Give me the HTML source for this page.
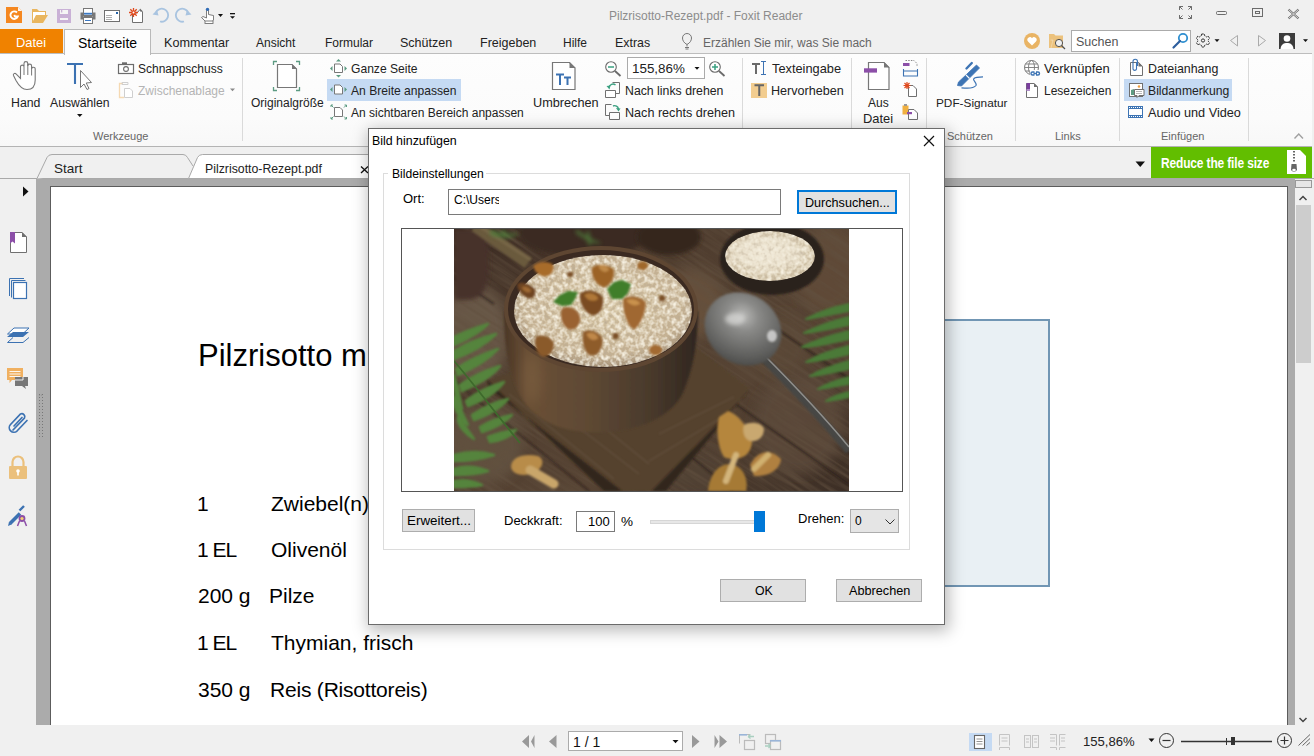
<!DOCTYPE html>
<html><head><meta charset="utf-8">
<style>
*{margin:0;padding:0;box-sizing:border-box}
html,body{width:1314px;height:756px;overflow:hidden;background:#f0f0f0;font-family:"Liberation Sans",sans-serif;color:#222}
.a{position:absolute}
.t{position:absolute;font-size:12px;line-height:14px;white-space:nowrap}
svg{position:absolute;overflow:visible}
</style></head><body>
<!-- title bar -->
<div class="a" style="left:0;top:0;width:1314px;height:29px;background:#f0f0f0"></div>
<div class="t" style="left:609px;top:9px;color:#8c8c8c">Pilzrisotto-Rezept.pdf - Foxit Reader</div>

<!-- quick access icons -->
<svg style="left:0;top:0" width="240" height="29" viewBox="0 0 240 29">
<path d="M6 7 H18 L22 11 V23 H6 Z" fill="#f5871f"/><path d="M18 7 L22 11 H18 Z" fill="#fff" opacity="0.9"/>
<path d="M17 12.5 A3.8 3.8 0 1 0 17.8 16.5 L15 16.5 L14.2 15" stroke="#fff" stroke-width="1.9" fill="none"/>
<path d="M32 9 H37 L39 11 H46 V16 H39 L36 23 H32 Z" fill="#e9b65f"/><path d="M33 12 H45 V16 H36 L33 22 Z" fill="#fff"/><path d="M36 15 H48 L43 23 H32 Z" fill="#e9b65f"/>
<rect x="57" y="9" width="14" height="14" fill="#c9b1d6"/><rect x="60" y="10" width="8" height="4" fill="#f5f5f5"/><rect x="61" y="10" width="1.3" height="2.5" fill="#c9b1d6"/><rect x="60" y="18" width="8" height="2" fill="#f5f5f5"/>
<rect x="83.5" y="8.5" width="9" height="7" fill="#fff" stroke="#777" stroke-width="1"/><rect x="84" y="12.8" width="8" height="1.8" fill="#3b78c2"/>
<path d="M80.5 12.5 H83.5 V19.5 H80.5 Z M92.5 12.5 H95.5 V19.5 H92.5 Z" fill="#777"/><path d="M83.5 16 H92.5 V17.5 H83.5 Z" fill="#777"/>
<rect x="83.5" y="17.5" width="9" height="6" fill="#fff" stroke="#777" stroke-width="1"/><rect x="85" y="20" width="6" height="1" fill="#3b78c2"/>
<rect x="104.5" y="10.5" width="15" height="11" fill="#fff" stroke="#707070" stroke-width="1"/><rect x="116" y="12" width="2" height="2" fill="#2563a8"/>
<path d="M106 15.5 H112 M106 17.5 H112 M106 19.5 H112" stroke="#999" stroke-width="0.8"/>
<path d="M132.5 13 H137 L140 9.5 L142.5 12 V22.5 H132.5 Z" fill="#fff" stroke="#707070" stroke-width="1"/><path d="M140 8.5 L143 11.5 H140 Z" fill="#707070"/>
<g stroke="#e04a1e" stroke-width="1.3"><path d="M133.5 8 V17 M129 12.5 H138 M130.3 9.3 L136.7 15.7 M136.7 9.3 L130.3 15.7"/></g><circle cx="133.5" cy="12.5" r="1" fill="#fff"/>
<path d="M156 12 A6.5 6.5 0 1 1 160 21.5" stroke="#a9c4e0" stroke-width="1.8" fill="none"/><path d="M152.5 14.5 L157 10 L158.5 15.5 Z" fill="#a9c4e0"/>
<path d="M188 12 A6.5 6.5 0 1 0 184 21.5" stroke="#a9c4e0" stroke-width="1.8" fill="none"/><path d="M191.5 14.5 L187 10 L185.5 15.5 Z" fill="#a9c4e0"/>
<path d="M206.5 15 V9.5 A1 1 0 0 1 208.5 9.5 V14.5 L213.5 15.5 V20 L212 21.5 H205.5 L201.5 17.5 L203 16.5 L206.5 18 Z" fill="#fff" stroke="#707070" stroke-width="0.9"/>
<circle cx="207.5" cy="9.3" r="1.6" fill="#2f6cb8"/><rect x="205" y="21" width="8" height="2.5" fill="#fff" stroke="#707070" stroke-width="0.9"/>
<path d="M218 14 H223 L220.5 17 Z" fill="#111"/>
<rect x="230" y="13" width="5" height="1.3" fill="#111"/><path d="M230 16.2 H235 L232.5 18.8 Z" fill="#111"/>
</svg>
<!-- window controls -->
<svg style="left:1170px;top:0" width="144" height="29" viewBox="1170 0 144 29">
<g stroke="#6c6c6c" stroke-width="1" fill="none">
<path d="M1179.5 6.5 H1183 M1179.5 6.5 V10 M1179.5 6.5 L1182.5 9.5"/>
<path d="M1191.5 6.5 H1188 M1191.5 6.5 V10 M1191.5 6.5 L1188.5 9.5"/>
<path d="M1179.5 18.5 H1183 M1179.5 18.5 V15 M1179.5 18.5 L1182.5 15.5"/>
<path d="M1191.5 18.5 H1188 M1191.5 18.5 V15 M1191.5 18.5 L1188.5 15.5"/>
<rect x="1216.5" y="11.5" width="10" height="3" rx="1"/>
<rect x="1252.5" y="8.5" width="10" height="8"/><rect x="1255.5" y="11.5" width="4" height="2"/>
<path d="M1288.5 9.5 L1298.5 18.5 M1298.5 9.5 L1288.5 18.5" stroke-width="2.2"/>
</g>
<path d="M1288.5 9.5 L1298.5 18.5 M1298.5 9.5 L1288.5 18.5" stroke="#f0f0f0" stroke-width="0.8"/>
</svg>

<!-- menu bar -->
<div class="a" style="left:0;top:29px;width:63px;height:24px;background:#f08200"></div>
<div class="t" style="left:16px;top:36px;color:#fff;font-size:12.9px">Datei</div>


<div class="t" style="left:164px;top:36px;font-size:12.6px">Kommentar</div>
<div class="t" style="left:256px;top:36px">Ansicht</div>
<div class="t" style="left:325px;top:36px">Formular</div>
<div class="t" style="left:400px;top:36px;font-size:12.5px">Schützen</div>
<div class="t" style="left:480px;top:36px;font-size:12.5px">Freigeben</div>
<div class="t" style="left:563px;top:36px">Hilfe</div>
<div class="t" style="left:615px;top:36px;font-size:12.4px">Extras</div>
<div class="t" style="left:703px;top:36px;color:#666;width:169px;overflow:hidden">Erzählen Sie mir, was Sie machen</div>

<!-- ribbon -->
<div class="a" style="left:0;top:53px;width:1312px;height:94px;background:linear-gradient(#fdfdfd,#fbfbfb 70%,#f8f8f8);border-top:1px solid #bdbdbd;border-bottom:1px solid #b4b4b4"></div>
<div class="a" style="left:64px;top:29px;width:87px;height:26px;background:#fdfdfd;border:1px solid #b9b9b9;border-bottom:none"></div>
<div class="t" style="left:78px;top:36px;font-size:14px;color:#000">Startseite</div>


<!-- ribbon labels -->
<div class="t" style="left:11px;top:96px;font-size:12.3px">Hand</div>
<div class="t" style="left:50px;top:96px;font-size:12.2px">Auswählen</div>
<div class="t" style="left:138px;top:62px">Schnappschuss</div>
<div class="t" style="left:138px;top:84px;color:#b4b4b4">Zwischenablage</div>
<div class="t" style="left:93px;top:129px;font-size:11px;color:#666">Werkzeuge</div>
<div class="t" style="left:251px;top:96px">Originalgröße</div>
<div class="a" style="left:327px;top:79px;width:134px;height:22px;background:#c5daf3"></div>
<div class="t" style="left:351px;top:62px;font-size:12.1px">Ganze Seite</div>
<div class="t" style="left:351px;top:84px;font-size:12.1px">An Breite anpassen</div>
<div class="t" style="left:351px;top:106px">An sichtbaren Bereich anpassen</div>
<div class="t" style="left:533px;top:96px;font-size:12.7px">Umbrechen</div>
<div class="a" style="left:627px;top:57px;width:78px;height:22px;background:#fff;border:1px solid #ababab"></div>
<div class="t" style="left:632px;top:62px;font-size:13.4px">155,86%</div>
<div class="t" style="left:625px;top:84px;font-size:12.3px">Nach links drehen</div>
<div class="t" style="left:625px;top:106px;font-size:12.6px">Nach rechts drehen</div>
<div class="t" style="left:772px;top:62px;font-size:12.8px">Texteingabe</div>
<div class="t" style="left:771px;top:84px;font-size:12.6px">Hervorheben</div>
<div class="t" style="left:868px;top:96px">Aus</div>
<div class="t" style="left:863px;top:112px;font-size:12.9px">Datei</div>
<div class="t" style="left:936px;top:96px;font-size:11.8px">PDF-Signatur</div>
<div class="t" style="left:947px;top:129px;font-size:11px;color:#666">Schützen</div>
<div class="t" style="left:1044px;top:62px;font-size:13px">Verknüpfen</div>
<div class="t" style="left:1044px;top:84px">Lesezeichen</div>
<div class="t" style="left:1055px;top:129px;font-size:11px;color:#666">Links</div>
<div class="a" style="left:1124px;top:79px;width:108px;height:22px;background:#c5daf3"></div>
<div class="t" style="left:1148px;top:62px;font-size:12.4px">Dateianhang</div>
<div class="t" style="left:1148px;top:84px;font-size:12.2px">Bildanmerkung</div>
<div class="t" style="left:1148px;top:106px;font-size:12.7px">Audio und Video</div>
<div class="t" style="left:1161px;top:129px;font-size:11px;color:#666">Einfügen</div>
<!-- separators -->
<div class="a" style="left:242px;top:58px;width:1px;height:83px;background:#dadada"></div>
<div class="a" style="left:742px;top:58px;width:1px;height:83px;background:#dadada"></div>
<div class="a" style="left:851px;top:58px;width:1px;height:83px;background:#dadada"></div>
<div class="a" style="left:926px;top:58px;width:1px;height:83px;background:#dadada"></div>
<div class="a" style="left:1015px;top:58px;width:1px;height:83px;background:#dadada"></div>
<div class="a" style="left:1119px;top:58px;width:1px;height:83px;background:#dadada"></div>
<div class="a" style="left:1248px;top:58px;width:1px;height:83px;background:#dadada"></div>
<!-- search -->
<div class="a" style="left:1071px;top:30px;width:120px;height:22px;background:#fff;border:1px solid #ababab"></div>
<div class="t" style="left:1076px;top:35px;color:#555;font-size:12.5px">Suchen</div>

<!-- ribbon icons -->
<svg style="left:0;top:0" width="1314" height="150" viewBox="0 0 1314 150">
<!-- hand -->
<path d="M20.5 76 V66.5 A1.8 1.8 0 0 1 24 66.5 V63.5 A1.9 1.9 0 0 1 27.8 63.5 V66 A1.9 1.9 0 0 1 31.6 66 V69 A1.8 1.8 0 0 1 35.2 69 V80 C35.2 86 32 89.5 27 89.5 C22 89.5 19 86 16 80.5 L13.5 75.5 C12.8 74 14.8 72.6 16 73.8 L20.5 78.5 Z" fill="#fff" stroke="#777" stroke-width="1.1"/>
<path d="M24 66.5 V75 M27.8 63.5 V75 M31.6 66 V75.5" stroke="#777" stroke-width="1"/>
<!-- T cursor -->
<path d="M67 64 H83 M75 64 V84" stroke="#3c72b2" stroke-width="2.1"/>
<path d="M80.5 70.5 V87.5 L84 84 L87 89.5 L89 88.5 L86.2 83 L91.5 82.5 Z" fill="#fff" stroke="#777" stroke-width="1"/>
<path d="M77 114 H82.5 L79.75 117 Z" fill="#111"/>
<!-- camera -->
<rect x="118.5" y="64.5" width="15" height="9" fill="#fff" stroke="#6c6c6c" stroke-width="1.2"/><rect x="122" y="62.3" width="5" height="2.3" fill="#6c6c6c"/>
<circle cx="126" cy="69" r="2.4" fill="none" stroke="#6c6c6c" stroke-width="1.1"/>
<!-- clipboard disabled -->
<path d="M123 83.5 H119.5 V97.5 H124" stroke="#f5d9b2" stroke-width="1.3" fill="none"/><path d="M122 84.5 V82.5 H128 V84.5 Z" fill="none" stroke="#cfcfcf" stroke-width="1"/>
<path d="M124.5 88.5 H130 L132.5 91 V97.5 H124.5 Z" fill="#fff" stroke="#cfcfcf" stroke-width="1"/>
<path d="M230 88.5 H235 L232.5 91.3 Z" fill="#8a8a8a"/>
<!-- originalgroesse -->
<g stroke="#5c9b82" stroke-width="1.3" fill="none"><path d="M273.5 65 V61.5 H277 M296 61.5 H299.5 V65 M273.5 87 V90.5 H277 M296 90.5 H299.5 V87"/></g>
<path d="M277.5 64.5 H292 L296.5 69 V87.5 H277.5 Z" fill="#fff" stroke="#777" stroke-width="1.2"/><path d="M292 64 L297 69 H292 Z" fill="#777"/>
<!-- ganze seite -->
<path d="M334.5 64 H340 L342.5 66.5 V72.5 H334.5 Z" fill="#fff" stroke="#777" stroke-width="1"/>
<g fill="#5c9b82"><path d="M336 61.5 H341 L338.5 59 Z"/><path d="M336 75 H341 L338.5 77.5 Z"/><path d="M332.5 66 V71 L330 68.5 Z"/><path d="M344.5 66 V71 L347 68.5 Z"/></g>
<!-- an breite -->
<path d="M334.5 85 H340 L342.5 87.5 V94 H334.5 Z" fill="#fff" stroke="#777" stroke-width="1"/>
<g fill="#5c9b82"><path d="M332.5 87 V92 L330 89.5 Z"/><path d="M344.5 87 V92 L347 89.5 Z"/></g>
<!-- an sichtbaren -->
<path d="M334.5 107.5 H340 L342.5 110 V116.5 H334.5 Z" fill="#fff" stroke="#777" stroke-width="1"/>
<g stroke="#5c9b82" stroke-width="1" fill="none"><path d="M331 105 L333.5 107.5 M331 105 H333 M331 105 V107"/><path d="M346.5 105 L344 107.5 M346.5 105 H344.5 M346.5 105 V107"/><path d="M331 119 L333.5 116.5 M331 119 H333 M331 119 V117"/><path d="M346.5 119 L344 116.5 M346.5 119 H344.5 M346.5 119 V117"/></g>
<!-- umbrechen -->
<path d="M552.5 62.5 H569.5 L575 68 V89.5 H552.5 Z" fill="#fff" stroke="#777" stroke-width="1.2"/><path d="M569.5 62 L575.5 68 H569.5 Z" fill="#777"/>
<g stroke="#3c72b2" stroke-width="2" fill="none"><path d="M556 74.5 H564 M560 74.5 V85"/><path d="M564 77.5 H571 M567.5 77.5 V85"/></g>
<!-- zoom out -->
<circle cx="611" cy="67" r="5.3" fill="#fff" stroke="#6a6a6a" stroke-width="1.1"/><path d="M615 71 L620.5 76" stroke="#6a6a6a" stroke-width="1.8"/><path d="M608 67 H614" stroke="#3aa080" stroke-width="1.5"/>
<!-- combo arrow -->
<path d="M694.5 67 H699.5 L697 69.8 Z" fill="#111"/>
<!-- zoom in -->
<circle cx="715" cy="67" r="5.3" fill="#fff" stroke="#6a6a6a" stroke-width="1.1"/><path d="M719 71 L724.5 76" stroke="#6a6a6a" stroke-width="1.8"/><path d="M712 67 H718 M715 64 V70" stroke="#3aa080" stroke-width="1.5"/>
<!-- rotate left -->
<path d="M612.5 82.5 H619.5 V93.5 H615.5" fill="none" stroke="#707070" stroke-width="1"/><path d="M605.5 90.5 H615.5 V97.5 H605.5 Z" fill="#fff" stroke="#707070" stroke-width="1"/>
<path d="M609 87.5 A4 4 0 0 1 615.5 85" stroke="#3aa080" stroke-width="1.4" fill="none"/><path d="M606.5 86 L610.5 85.5 L609.5 89.5 Z" fill="#3aa080"/>
<!-- rotate right -->
<path d="M611.5 104.5 H605.5 V115.5 H609.5" fill="none" stroke="#707070" stroke-width="1"/><path d="M609.5 112.5 H619.5 V119.5 H609.5 Z" fill="#fff" stroke="#707070" stroke-width="1"/>
<path d="M613 106 A4 4 0 0 1 618.5 109" stroke="#3aa080" stroke-width="1.4" fill="none"/><path d="M616 108 L620.5 108.5 L618.5 111.5 Z" fill="#3aa080"/>
<!-- texteingabe -->
<path d="M752 64 H760 M756 64 V74" stroke="#6a6a6a" stroke-width="2"/>
<path d="M761 61.5 H766 M763.5 61.5 V74.5 M761 74.5 H766" stroke="#3c72b2" stroke-width="1"/>
<!-- hervorheben -->
<rect x="751" y="83" width="16" height="15" fill="#f2cd90"/><path d="M754.5 85.3 H764 M759.25 85.3 V96" stroke="#666" stroke-width="2"/>
<!-- aus datei -->
<path d="M868.5 62.5 H884 L889 67.5 V89.5 H868.5 Z" fill="#fff" stroke="#777" stroke-width="1.2"/><path d="M884 62 L889.5 67.5 H884 Z" fill="#777"/>
<rect x="864" y="68.3" width="13" height="4.3" fill="#8c4fa8"/>
<!-- small insert icons -->
<path d="M905.5 60.5 H914 L917 63.5 V67" fill="none" stroke="#888" stroke-width="1" stroke-dasharray="1.5 1.2"/><rect x="903" y="63" width="6.5" height="3" fill="#8c4fa8"/>
<path d="M903.5 69 V76 H917.5 V69 M903.5 71 H917.5" fill="none" stroke="#3c72b2" stroke-width="1.1"/>
<path d="M908.5 85.5 H913 L916.5 89 V96.5 H908.5 Z" fill="#fff" stroke="#707070" stroke-width="1"/>
<g stroke="#e04a1e" stroke-width="1.2"><path d="M907 82 V89 M903.5 85.5 H910.5 M904.5 83 L909.5 88 M909.5 83 L904.5 88"/></g>
<rect x="902.5" y="105.5" width="6" height="9" fill="#f0b040"/><rect x="904" y="104" width="3" height="2" fill="#999"/>
<path d="M908.5 109.5 H914 L917.5 113 V119.5 H908.5 Z" fill="#fff" stroke="#707070" stroke-width="1"/><rect x="907" y="112" width="5" height="2.2" fill="#8c4fa8"/>
<!-- pdf signatur -->
<path d="M976.5 65 L979.5 68 L961.5 86 L957.5 85.5 L958.5 82 Z" fill="#3d74b4" stroke="#3d74b4" stroke-width="0.8" stroke-linejoin="round"/>
<path d="M966 75 L969.5 78.5" stroke="#fdfdfd" stroke-width="1.1"/>
<path d="M966.5 68.5 L971.8 63" stroke="#3d74b4" stroke-width="2.4" stroke-linecap="round"/>
<path d="M961.5 87.8 C967 88.5 974 88 976 85.5 C977.5 83 972 80 974 78.5 C975.5 77 980 76.8 983 76.8" stroke="#3d74b4" stroke-width="1.2" fill="none"/>
<!-- globe -->
<circle cx="1031.5" cy="67.5" r="7" fill="#fff" stroke="#777" stroke-width="1"/>
<ellipse cx="1031.5" cy="67.5" rx="3" ry="7" fill="none" stroke="#777" stroke-width="0.9"/>
<path d="M1024.5 67.5 H1038.5 M1025.5 64 H1037.5 M1025.5 71 H1037.5" stroke="#777" stroke-width="0.9"/>
<rect x="1030" y="70" width="10.5" height="6" fill="#fdfdfd"/>
<path d="M1034.5 72 H1032.5 A1.5 1.5 0 0 0 1032.5 75 H1034.5 M1036 72 H1038 A1.5 1.5 0 0 1 1038 75 H1036 M1033.5 73.5 H1037" stroke="#3d74b4" stroke-width="1.4" fill="none"/>
<!-- lesezeichen -->
<path d="M1026.5 83.5 H1034 L1037.5 87 V97.5 H1026.5 Z" fill="#fff" stroke="#707070" stroke-width="1"/><path d="M1034 83 L1038 87 H1034 Z" fill="#707070"/>
<rect x="1026.5" y="83" width="3.5" height="8" fill="#7b3f9e"/><rect x="1026.5" y="89" width="3.5" height="2" fill="#b08fc8"/>
<!-- dateianhang -->
<path d="M1130.5 62.5 H1138.5 L1142.5 66.5 V75.5 H1130.5 Z" fill="#fff" stroke="#707070" stroke-width="1"/><path d="M1138.5 62 L1143 66.5 H1138.5 Z" fill="#707070"/>
<path d="M1136.5 62 V69 A1.8 1.8 0 0 1 1133 69 V61.5 A2.2 2.2 0 0 1 1137.5 61.5 V66" stroke="#3d74b4" stroke-width="1.1" fill="none"/>
<!-- bildanmerkung -->
<rect x="1129.5" y="83.5" width="13" height="13" fill="#fff" stroke="#707070" stroke-width="1"/><path d="M1131 95 V90 L1134 89 V95 Z" fill="#5c9b82"/><circle cx="1139" cy="86.5" r="1.3" fill="#f0a040"/>
<path d="M1134.5 89.5 H1144 V95.5 H1139 L1137 97.5 V95.5 H1134.5 Z" fill="#fff" stroke="#707070" stroke-width="1"/><path d="M1136 91.5 H1142 M1136 93.5 H1142" stroke="#999" stroke-width="0.7"/>
<!-- film -->
<rect x="1128.5" y="106.5" width="14" height="11" fill="#fff" stroke="#3d74b4" stroke-width="1"/>
<rect x="1128" y="106" width="15" height="3" fill="#3d74b4"/><rect x="1128" y="115" width="15" height="3" fill="#3d74b4"/>
<path d="M1129 107.5 H1142.5 M1129 116.5 H1142.5" stroke="#fff" stroke-width="1" stroke-dasharray="1 1"/>
<!-- collapse caret -->
<path d="M1294.5 138.5 L1298.75 134 L1303 138.5" stroke="#a0a0a0" stroke-width="1.4" fill="none"/>
<!-- heart -->
<circle cx="1032" cy="41" r="8" fill="#e9b465"/><path d="M1032 45.5 L1028 41.5 A2.2 2.2 0 0 1 1032 38.2 A2.2 2.2 0 0 1 1036 41.5 Z" fill="#fff"/>
<!-- folder search -->
<path d="M1049 34 H1054 L1055.5 35.5 H1063 V48 H1049 Z" fill="#ecc27d"/><path d="M1050.5 40 H1053 L1051 48" fill="none" stroke="#fff" stroke-width="0.6" opacity="0.5"/>
<circle cx="1059" cy="43" r="3.6" fill="#f0f0f0" stroke="#505050" stroke-width="1"/><path d="M1061.5 45.5 L1065 49" stroke="#505050" stroke-width="1.3"/>
<!-- search magnifier -->
<circle cx="1183" cy="38" r="4.2" fill="none" stroke="#2f8fd0" stroke-width="1.8"/><path d="M1180 41 L1173.5 47.5" stroke="#2e5f9e" stroke-width="2.2" stroke-linecap="round"/>
<!-- gear -->
<g transform="translate(1203 40.5)" fill="none" stroke="#333" stroke-width="1"><path d="M-1.3 -6.5 H1.3 L1.8 -4.6 L3.5 -3.6 L5.3 -4.3 L6.6 -2.1 L5.2 -0.7 V0.7 L6.6 2.1 L5.3 4.3 L3.5 3.6 L1.8 4.6 L1.3 6.5 H-1.3 L-1.8 4.6 L-3.5 3.6 L-5.3 4.3 L-6.6 2.1 L-5.2 0.7 V-0.7 L-6.6 -2.1 L-5.3 -4.3 L-3.5 -3.6 L-1.8 -4.6 Z" stroke-dasharray="2 0.8"/><circle r="1.6"/></g>
<path d="M1214.5 39.3 H1219.5 L1217 42 Z" fill="#111"/>
<path d="M1237.5 35.5 L1230.5 40.5 L1237.5 46 Z" fill="none" stroke="#aaa" stroke-width="1"/>
<path d="M1258.5 35.5 L1265.5 40.5 L1258.5 46 Z" fill="none" stroke="#aaa" stroke-width="1"/>
<!-- avatar -->
<rect x="1279" y="33" width="16" height="16" fill="#3c3c3c"/><circle cx="1287" cy="38.5" r="3.3" fill="#fff"/><path d="M1280.5 49 C1281 44 1284 43 1287 43 C1290 43 1293 44 1293.5 49 Z" fill="#fff"/>
<path d="M1303 39.3 H1308 L1305.5 42 Z" fill="#111"/>
<!-- lightbulb -->
<path d="M687 46.5 V44.5 C684 43 682.5 40.5 682.5 38 A4.5 4.5 0 0 1 691.5 38 C691.5 40.5 690 43 687 44.5" fill="none" stroke="#777" stroke-width="1"/><path d="M685 47.5 H689 M685.5 49 H688.5" stroke="#777" stroke-width="1"/>
</svg>

<!-- doc tab row -->
<div class="a" style="left:0;top:147px;width:1314px;height:32px;background:#f0f0f0;border-bottom:1px solid #a9a9a9"></div>

<!-- doc area -->
<div class="a" style="left:36px;top:179px;width:1259px;height:546px;background:#ababab"></div>
<div class="a" style="left:50px;top:186px;width:1238px;height:539px;background:#fff;border-left:1px solid #5c5c5c;border-top:1px solid #5c5c5c;border-right:1px solid #5c5c5c"></div>

<!-- doc tabs shapes -->
<svg style="left:0;top:146px" width="1314" height="34" viewBox="0 146 1314 34">
<path d="M37 178.5 L47 157.5 Q48.5 154.5 52 154.5 H183 Q186 154.5 187.5 157.5 L193 166" fill="#f0f0f0" stroke="#a9a9a9" stroke-width="1"/>
<path d="M188.5 178.5 L197.5 157.5 Q199 154.5 202.5 154.5 H370 V178.5 Z" fill="#fff" stroke="#a9a9a9" stroke-width="1"/>
<path d="M361 166.5 L368 173 M368 166.5 L361 173" stroke="#111" stroke-width="1.3"/>
<path d="M1135.5 161.5 H1145 L1140.25 167 Z" fill="#111"/>
</svg>
<!-- green banner -->
<div class="a" style="left:1151px;top:147px;width:161px;height:31px;background:#62be00"></div>
<div class="t" style="left:1161px;top:154px;font-size:15px;line-height:17px;font-weight:bold;color:#fff;transform:scaleX(0.80);transform-origin:0 0;letter-spacing:-0.2px">Reduce the file size</div>
<svg style="left:1286px;top:149px" width="22" height="26" viewBox="0 0 22 26">
<path d="M1 1 H14 L20 7 V25 H1 Z" fill="#fff"/>
<path d="M8 2 V14" stroke="#666" stroke-width="2" stroke-dasharray="1.5 1.5"/>
<path d="M5.5 15 H10.5 L11 21 A3.5 3.5 0 0 1 5 21 Z" fill="#666"/><ellipse cx="8" cy="21" rx="1.8" ry="1.3" fill="#fff"/>
</svg>
<!-- sidebar icons -->
<svg style="left:0;top:180px" width="50" height="360" viewBox="0 180 50 360">
<path d="M23 186.5 L28.5 191.5 L23 196.5 Z" fill="#111"/>
<path d="M10.5 232.5 H22 L26.5 237 V252.5 H10.5 Z" fill="#fff" stroke="#707070" stroke-width="1"/><path d="M22 232 L27 237 H22 Z" fill="#707070"/>
<path d="M10 232 H15 V243.5 L12.5 241.5 L10 243.5 Z" fill="#8c4fa8"/>
<path d="M9.5 296 V278.5 H24 M11.5 297.5 V280.5 H25.5" fill="none" stroke="#3c72b2" stroke-width="1"/>
<rect x="13.5" y="282.5" width="13" height="16" fill="#fff" stroke="#3c72b2" stroke-width="1.2"/>
<path d="M7.5 334 L14 328 H29 L22.5 334 Z" fill="#fff" stroke="#3c72b2" stroke-width="1"/>
<path d="M7 337 L13 332 H29 L23 337 Z" fill="#3c72b2"/>
<path d="M7.5 342.5 L13 337.5 M29 337.5 L23 342.5 H7.5" fill="none" stroke="#3c72b2" stroke-width="1"/>
<path d="M7 368 H23 V380 H12 L9.5 383 V380 H7 Z" fill="#f0b060"/><path d="M9.5 371.5 H20.5 M9.5 374 H20.5 M9.5 376.5 H20.5" stroke="#fff" stroke-width="0.9"/>
<path d="M15 377 H28 V386 H25 L26 389 L22 386 H15 Z" fill="#777"/><path d="M23 377 V380 H15" fill="none" stroke="#f0f0f0" stroke-width="1"/>
<path d="M13 430 L24.5 418 A3 3 0 0 0 20.5 414 L10.5 424.5 A4.6 4.6 0 0 0 17 431 L27 420.5 M14 426 L22 417.5" fill="none" stroke="#3c72b2" stroke-width="1.7" stroke-linecap="round"/>
<path d="M12.5 466 V462 A5.5 5.5 0 0 1 23.5 462 V466" fill="none" stroke="#ebc07c" stroke-width="2.2"/>
<rect x="9" y="466" width="18" height="13" rx="1" fill="#ebc07c"/><circle cx="18" cy="471" r="1.8" fill="#fff"/><rect x="17.2" y="471" width="1.6" height="4.5" fill="#fff"/>
<path d="M10 523.5 L20 513.5" stroke="#3c72b2" stroke-width="3.6"/><path d="M8 526 L9 522 L11.5 524.5 Z" fill="#3c72b2"/><path d="M19.5 510.5 L24 506" stroke="#3c72b2" stroke-width="2.4"/>
<circle cx="22" cy="518.5" r="3.4" fill="#8c4fa8"/><circle cx="22" cy="518.5" r="1.6" fill="#f5d070"/><path d="M19.5 521 L17.5 526 M24.5 521 L26.5 526" stroke="#8c4fa8" stroke-width="1.5"/>
<g fill="#8a8a8a"><circle cx="39.5" cy="395" r="0.6"/><circle cx="41.5" cy="395" r="0.6"/></g>
</svg>
<!-- grip dots -->
<svg style="left:38px;top:393px" width="6" height="45" viewBox="0 0 6 45"><defs><pattern id="gp" width="3" height="3" patternUnits="userSpaceOnUse"><rect x="1" y="1" width="1" height="1" fill="#777"/></pattern></defs><rect width="6" height="45" fill="url(#gp)"/></svg>

<!-- doc tabs text -->
<div class="t" style="left:54px;top:162px;font-size:13.5px">Start</div>
<div class="t" style="left:205px;top:162px;font-size:12.3px">Pilzrisotto-Rezept.pdf</div>
<!-- page content -->
<div class="a" style="left:944px;top:319px;width:106px;height:268px;background:#e9f0f4;border:2px solid #7196b4;border-left:none"></div>
<div class="t" style="left:198px;top:339px;font-size:31px;line-height:34px;color:#000">Pilzrisotto m</div>
<div class="t" style="left:197px;top:492px;font-size:21px;line-height:24px;color:#000">1</div>
<div class="t" style="left:271px;top:492px;font-size:21px;line-height:24px;color:#000">Zwiebel(n)</div>
<div class="t" style="left:197px;top:538px;font-size:21px;line-height:24px;color:#000;letter-spacing:-1px">1 EL</div>
<div class="t" style="left:271px;top:538px;font-size:21px;line-height:24px;color:#000">Olivenöl</div>
<div class="t" style="left:198px;top:584px;font-size:21px;line-height:24px;color:#000">200 g</div>
<div class="t" style="left:269px;top:584px;font-size:21px;line-height:24px;color:#000">Pilze</div>
<div class="t" style="left:197px;top:631px;font-size:21px;line-height:24px;color:#000;letter-spacing:-1px">1 EL</div>
<div class="t" style="left:271px;top:631px;font-size:21px;line-height:24px;color:#000">Thymian, frisch</div>
<div class="t" style="left:198px;top:678px;font-size:21px;line-height:24px;color:#000">350 g</div>
<div class="t" style="left:270px;top:678px;font-size:21px;line-height:24px;color:#000;letter-spacing:-0.2px">Reis (Risottoreis)</div>

<!-- scrollbar -->
<div class="a" style="left:1295px;top:179px;width:19px;height:546px;background:#f0f0f0"></div>
<div class="a" style="left:1296px;top:205px;width:15px;height:158px;background:#cdcdcd"></div>

<!-- status bar -->
<div class="a" style="left:0;top:725px;width:1314px;height:31px;background:#f0f0f0"></div>
<!-- status bar content -->
<div class="a" style="left:568px;top:731px;width:115px;height:20px;background:#fff;border:1px solid #ababab"></div>
<div class="t" style="left:573px;top:735px;font-size:14px;color:#111">1 / 1</div>
<div class="t" style="left:1083px;top:735px;font-size:13.1px">155,86%</div>



<!-- status bar icons -->
<svg style="left:500px;top:726px" width="814" height="30" viewBox="500 726 814 30">
<path d="M529 735 L522 741.5 L529 748 Z M534.5 735 L531 741.5 L534.5 748 Z" fill="#999"/>
<path d="M556.5 735 L549 741.5 L556.5 748 Z" fill="#999"/>
<path d="M672.5 740 H678.5 L675.5 743.3 Z" fill="#111"/>
<path d="M692 735 L699.5 741.5 L692 748 Z" fill="#999"/>
<path d="M714.5 735 L718.5 741.5 L714.5 748 Z M719.5 735 L727 741.5 L719.5 748 Z" fill="#999"/>
<path d="M739.5 743.5 V734.5 H750" fill="none" stroke="#bbb" stroke-width="1"/><rect x="739" y="734" width="8" height="1.6" fill="#9ab5d8"/>
<rect x="744.5" y="740.5" width="10" height="9" fill="#f0f0f0" stroke="#bbb" stroke-width="1.2"/>
<path d="M748 736.5 H754 M748 736.5 L750.5 734.5 M748 736.5 L750.5 738.5" stroke="#a9cfc0" stroke-width="1.3" fill="none"/>
<rect x="765.5" y="734.5" width="10" height="9" fill="none" stroke="#bbb" stroke-width="1.2"/>
<rect x="770.5" y="740.5" width="10" height="9" fill="#f0f0f0" stroke="#bbb" stroke-width="1.2"/><rect x="770" y="740" width="11" height="1.6" fill="#9ab5d8"/>
<path d="M765 746 H770.5 M770.5 746 L768.5 744 M770.5 746 L768.5 748" stroke="#a9cfc0" stroke-width="1.3" fill="none"/>
<rect x="969" y="733" width="23" height="18" fill="#c5daf3"/>
<rect x="974.5" y="735.5" width="10" height="13" fill="#fff" stroke="#666" stroke-width="1.1"/><path d="M976.5 739 H982.5 M976.5 741.5 H982.5 M976.5 744 H982.5" stroke="#888" stroke-width="0.9"/>
<g fill="none" stroke="#c4c4c4" stroke-width="1"><path d="M999.5 734.5 H1009.5 V745.5 M999.5 734.5 V745.5 M999.5 750 V747.5 H1009.5 V750 M1001.5 738 H1007.5 M1001.5 741 H1007.5"/>
<rect x="1024.5" y="735.5" width="6" height="12"/><rect x="1032.5" y="735.5" width="6" height="12"/><path d="M1026 739 H1029 M1026 742 H1029 M1034 739 H1037 M1034 742 H1037"/>
<path d="M1050 734.5 H1056.5 V745.5 M1059.5 745.5 V734.5 H1065.5 M1050 738 H1055 M1050 741 H1055 M1061 738 H1065 M1061 741 H1065 M1050 747.5 H1056.5 V750 M1059.5 750 V747.5 H1065.5"/></g>
<path d="M1148.5 738.5 H1154.5 L1151.5 742 Z" fill="#111"/>
<circle cx="1166.5" cy="740.5" r="7" fill="none" stroke="#333" stroke-width="1"/><path d="M1162.5 740.5 H1170.5" stroke="#333" stroke-width="1.2"/>
<path d="M1181 741.5 H1272" stroke="#333" stroke-width="1.6"/><path d="M1226.5 738 V745" stroke="#333" stroke-width="1"/><rect x="1231" y="737" width="4" height="8" fill="#333"/>
<circle cx="1284.5" cy="740.5" r="7" fill="none" stroke="#333" stroke-width="1"/><path d="M1280.5 740.5 H1288.5 M1284.5 736.5 V744.5" stroke="#333" stroke-width="1.2"/>
<path d="M1298.5 745.5 L1310 734.5 M1302.5 745.5 L1310 738.5 M1306.5 745.5 L1310 742.5" stroke="#666" stroke-width="1"/>
</svg>
<!-- scrollbar arrows -->
<svg style="left:1295px;top:179px" width="19" height="546" viewBox="1295 179 19 546">
<rect x="1295.5" y="180.5" width="16" height="7" fill="#e6e6e6" stroke="#999" stroke-width="1"/>
<path d="M1299.5 200 L1303 196.5 L1306.5 200" stroke="#444" stroke-width="1.5" fill="none"/>
<path d="M1299.5 718 L1303 721.5 L1306.5 718" stroke="#444" stroke-width="1.5" fill="none"/>
</svg>

<!-- DIALOG -->
<div class="a" style="left:368px;top:128px;width:577px;height:497px;background:#fff;border:1px solid #6b6b6b;box-shadow:2px 4px 15px 2px rgba(0,0,0,0.27)"></div>
<div class="t" style="left:372px;top:134px;color:#000;font-size:12.4px">Bild hinzufügen</div>
<svg style="left:923px;top:135px" width="12" height="12"><path d="M1 1L11 11M11 1L1 11" stroke="#111" stroke-width="1.2"/></svg>
<!-- groupbox -->
<div class="a" style="left:383px;top:173px;width:527px;height:377px;border:1px solid #dcdcdc"></div>
<div class="a" style="left:388px;top:166px;width:98px;height:14px;background:#fff"></div>
<div class="t" style="left:392px;top:167px;color:#000;font-size:12.15px">Bildeinstellungen</div>
<div class="t" style="left:403px;top:192px;color:#000;font-size:13px">Ort:</div>
<div class="a" style="left:448px;top:189px;width:333px;height:26px;border:1px solid #7a7a7a;background:#fff"></div>
<div class="t" style="left:454px;top:193px;color:#000;width:45px;overflow:hidden">C:\Users</div>
<div class="a" style="left:797px;top:190px;width:100px;height:24px;border:2px solid #0078d7;background:#e1e1e1"></div>
<div class="t" style="left:805px;top:196px;color:#000;font-size:12.6px">Durchsuchen...</div>
<!-- preview -->
<div class="a" style="left:401px;top:228px;width:502px;height:264px;border:1px solid #555;background:#fff"></div>
<svg id="photo" style="left:454px;top:229px;overflow:hidden" width="395" height="262" viewBox="0 0 395 262">
<defs>
<linearGradient id="bg" x1="0" y1="0" x2="1" y2="1">
<stop offset="0" stop-color="#3a2a22"/><stop offset="0.3" stop-color="#4e3c2e"/><stop offset="0.65" stop-color="#574434"/><stop offset="1" stop-color="#3c2e25"/>
</linearGradient>
<linearGradient id="bowlG" x1="0" y1="0" x2="1" y2="0">
<stop offset="0" stop-color="#4a3626"/><stop offset="0.12" stop-color="#6a5036"/><stop offset="0.4" stop-color="#604a34"/><stop offset="0.75" stop-color="#4a3a2c"/><stop offset="1" stop-color="#30261f"/>
</linearGradient>
<radialGradient id="riceG" cx="0.5" cy="0.45" r="0.6"><stop offset="0" stop-color="#d6c6a4"/><stop offset="0.75" stop-color="#c6b292"/><stop offset="1" stop-color="#8a745a"/></radialGradient>
<radialGradient id="spoonG" cx="0.4" cy="0.35" r="0.7"><stop offset="0" stop-color="#b9b9b7"/><stop offset="0.3" stop-color="#8a8a88"/><stop offset="0.8" stop-color="#5e5e5c"/><stop offset="1" stop-color="#4a4a48"/></radialGradient>
<radialGradient id="parmG" cx="0.45" cy="0.45" r="0.6"><stop offset="0" stop-color="#eee5d2"/><stop offset="1" stop-color="#cfc0a3"/></radialGradient>
<filter id="b1" x="-20%" y="-20%" width="140%" height="140%"><feGaussianBlur stdDeviation="0.8"/></filter>
<filter id="b2" x="-30%" y="-30%" width="160%" height="160%"><feGaussianBlur stdDeviation="2"/></filter>
<filter id="b4" x="-50%" y="-50%" width="200%" height="200%"><feGaussianBlur stdDeviation="6"/></filter>
<filter id="grain" x="0" y="0" width="100%" height="100%">
<feTurbulence type="fractalNoise" baseFrequency="0.22" numOctaves="2" seed="3" result="n"/>
<feColorMatrix in="n" type="matrix" values="0 0 0 0 0.93  0 0 0 0 0.88  0 0 0 0 0.76  0 0 0 -2.2 1.35" result="spots"/>
<feColorMatrix in="n" type="matrix" values="0 0 0 0 0.5  0 0 0 0 0.41  0 0 0 0 0.3  0 0 0 3.0 -1.7" result="dspots"/>
<feMerge result="m"><feMergeNode in="SourceGraphic"/><feMergeNode in="dspots"/><feMergeNode in="spots"/></feMerge>
<feGaussianBlur in="m" stdDeviation="0.5" result="mb"/>
<feComposite in="mb" in2="SourceGraphic" operator="in"/>
</filter>
<filter id="wood" x="0" y="0" width="100%" height="100%">
<feTurbulence type="fractalNoise" baseFrequency="0.012 0.25" numOctaves="3" seed="7" result="n"/>
<feColorMatrix in="n" type="matrix" values="0 0 0 0 0.12  0 0 0 0 0.08  0 0 0 0 0.05  0 0 0 -1.6 1.0"/>
</filter>
</defs>
<rect width="395" height="262" fill="url(#bg)"/>
<!-- light wood patches -->
<g filter="url(#b4)">
<ellipse cx="20" cy="105" rx="35" ry="50" fill="#6e5d4c" opacity="0.85"/>
<ellipse cx="30" cy="215" rx="40" ry="40" fill="#6b5a4a" opacity="0.6"/>
<ellipse cx="235" cy="75" rx="35" ry="35" fill="#6a5440" opacity="0.8"/>
<ellipse cx="375" cy="40" rx="35" ry="45" fill="#5f4b39" opacity="0.9"/>
<ellipse cx="345" cy="195" rx="45" ry="50" fill="#5c4a3c" opacity="0.8"/>
<ellipse cx="240" cy="245" rx="40" ry="25" fill="#524134" opacity="0.8"/>
<ellipse cx="330" cy="115" rx="25" ry="30" fill="#5c4838" opacity="0.7"/>
</g>
<!-- wood grain -->
<g transform="rotate(33 197 131)"><rect x="-150" y="-150" width="700" height="560" filter="url(#wood)"/></g>
<!-- plank lines -->
<g stroke="#241a15" stroke-width="1.6" opacity="0.75" filter="url(#b1)">
<path d="M0 152 L135 262"/><path d="M170 175 L280 262"/><path d="M235 142 L395 255"/><path d="M320 98 L395 150"/><path d="M0 48 L40 75"/>
</g>
<!-- cloth top-left -->
<path d="M0 0 H28 C38 18 36 48 30 62 C24 72 10 72 0 70 Z" fill="#46302b" filter="url(#b2)"/>
<!-- handle -->
<path d="M21 -3 L74 34" stroke="#6a5a3e" stroke-width="12" filter="url(#b1)"/>
<path d="M25 -3 L77 31" stroke="#857352" stroke-width="3" opacity="0.5" filter="url(#b1)"/>
<!-- top pot -->
<ellipse cx="130" cy="4" rx="65" ry="24" fill="#3b2a21" filter="url(#b2)"/>
<ellipse cx="215" cy="8" rx="32" ry="18" fill="#36271f" filter="url(#b2)"/>
<!-- top sprigs -->
<g filter="url(#b2)" fill="#4f7d3a" opacity="0.85">
<path d="M36 0 C44 4 56 6 66 4 C58 10 46 10 36 6 Z"/><path d="M48 -2 C52 2 54 6 54 10 C50 8 48 4 48 -2 Z"/>
<path d="M122 0 C130 6 140 12 148 14 C140 16 130 10 122 4 Z"/><path d="M134 0 C136 6 138 12 136 18 C132 12 132 6 134 0 Z"/>
</g>
<!-- parmesan bowl -->
<ellipse cx="318" cy="30" rx="52" ry="36" fill="#2b211c" filter="url(#b1)"/>
<g filter="url(#grain)"><ellipse cx="316" cy="27" rx="45" ry="25" fill="url(#parmG)"/></g>
<ellipse cx="314" cy="24" rx="36" ry="16" fill="#f0e9d8" opacity="0.35" filter="url(#b2)"/>
<!-- board -->
<path d="M32 152 L205 90 L296 160 L205 262 L150 262 Z" fill="#54422f" filter="url(#b1)"/>
<path d="M32 150 L150 262 L168 262 L36 160 Z" fill="#33271f" filter="url(#b1)"/>
<path d="M296 160 L212 262 L198 262 L290 168 Z" fill="#30251e" filter="url(#b1)"/>
<g stroke="#6e5b4a" stroke-width="1.2" opacity="0.55" filter="url(#b1)"><path d="M55 165 L160 250"/><path d="M75 160 L185 245"/><path d="M100 158 L195 235"/><path d="M205 205 L280 168"/><path d="M195 232 L282 180"/></g>
<!-- bowl body -->
<path d="M50 82 C50 120 56 158 76 180 C98 202 128 204 150 203 C182 202 214 190 228 166 C240 140 244 110 244 82 Z" fill="url(#bowlG)" filter="url(#b1)"/>
<ellipse cx="78" cy="150" rx="10" ry="25" fill="#8a6a48" opacity="0.35" filter="url(#b4)"/>
<ellipse cx="147" cy="80" rx="97" ry="63" fill="#5e4632"/>
<ellipse cx="147" cy="80" rx="93" ry="59" fill="#3b2a21"/>
<!-- rice -->
<g filter="url(#grain)"><ellipse cx="149" cy="82" rx="89" ry="56" fill="url(#riceG)"/></g>
<!-- mushrooms on rice -->
<g filter="url(#b1)" transform="translate(140 80) scale(1.08) translate(-140 -80)">
<path d="M84 40 C88 36 98 35 102 39 C104 44 100 50 94 50 C89 49 84 45 84 40 Z" fill="#a86c2c"/>
<path d="M69 57 C73 54 80 56 85 61 C87 67 84 71 79 70 C74 68 69 63 69 57 Z" fill="#6e4522"/>
<path d="M73 60 C76 58 80 60 82 63 C80 66 76 65 73 60 Z" fill="#a06a34"/>
<path d="M138 42 C142 38 152 38 158 43 C160 50 156 58 149 60 C142 58 137 50 138 42 Z" fill="#9c6428"/>
<path d="M144 40 C148 38 153 40 154 44 C151 47 146 46 144 40 Z" fill="#c08a48"/>
<path d="M127 66 C132 61 143 62 148 69 C150 77 146 86 139 86 C132 84 126 75 127 66 Z" fill="#7a4c22"/>
<path d="M131 67 C135 64 141 65 144 70 C141 74 134 73 131 67 Z" fill="#b07838"/>
<path d="M110 80 C115 76 124 79 127 87 C128 95 123 100 117 99 C111 97 108 88 110 80 Z" fill="#9a6230"/>
<path d="M130 101 C135 98 145 100 148 108 C148 118 143 124 137 123 C131 121 128 110 130 101 Z" fill="#8e5c2c"/>
<path d="M133 103 C137 101 142 102 144 107 C140 110 135 109 133 103 Z" fill="#c08848"/>
<path d="M167 70 C172 67 184 68 188 74 C188 82 183 96 177 99 C171 96 166 82 167 70 Z" fill="#a06830"/>
<path d="M170 72 C174 70 180 71 183 75 C179 78 173 77 170 72 Z" fill="#c9924e"/>
<path d="M86 106 C91 103 100 105 103 112 C103 120 98 125 92 124 C87 122 84 113 86 106 Z" fill="#8a5a2c"/>
<ellipse cx="185" cy="40" rx="5" ry="4" fill="#a0672c"/><ellipse cx="197" cy="118" rx="6" ry="5" fill="#a36a30"/>
<ellipse cx="203" cy="70" rx="3" ry="3" fill="#7a5028"/><ellipse cx="118" cy="48" rx="3" ry="2.5" fill="#7a5028"/><ellipse cx="160" cy="105" rx="3" ry="3" fill="#7a5028"/>
</g>
<!-- parsley -->
<g fill="#3f7e2a" filter="url(#b1)">
<path d="M99 73 L106 66 L114 62 L124 63 L121 70 L117 76 L108 77 Z"/><path d="M153 60 L160 53 L168 51 L177 55 L174 64 L168 70 L158 70 Z"/>
</g>
<!-- spoon -->
<path d="M306 126 C330 150 360 180 395 222" stroke="#474745" stroke-width="7.5" fill="none" filter="url(#b1)"/>
<path d="M308 124 C332 148 362 178 395 218" stroke="#a0a09e" stroke-width="1.6" fill="none" opacity="0.8"/>
<ellipse cx="289" cy="100" rx="40" ry="35" transform="rotate(35 289 100)" fill="url(#spoonG)" filter="url(#b1)"/>
<ellipse cx="281" cy="90" rx="10" ry="6" fill="#d8d8d6" opacity="0.75" filter="url(#b2)"/>
<ellipse cx="318" cy="107" rx="5" ry="6" fill="#dcdcdc" opacity="0.8" filter="url(#b1)"/>
<!-- right fern -->
<g filter="url(#b1)" fill="#4b7a38" stroke="#4b7a38" stroke-width="2" stroke-linejoin="round">
<path d="M395 75 C380 78 365 83 352 90 C366 88 382 84 395 82 Z"/>
<path d="M395 88 C378 92 362 98 350 104 C364 103 382 98 395 96 Z"/>
<path d="M395 102 C378 106 360 112 348 118 C362 118 380 113 395 110 Z"/>
<path d="M395 117 C378 121 362 127 352 133 C366 132 382 128 395 125 Z"/>
<path d="M395 132 C380 136 366 141 356 147 C370 146 384 142 395 140 Z"/>
<path d="M395 148 C384 151 372 155 364 160 C376 159 386 156 395 155 Z"/>
<path d="M395 163 C386 165 378 168 372 172 C382 171 390 169 395 168 Z"/>
</g>
<!-- left fern -->
<g filter="url(#b1)" fill="#54843c" stroke="#54843c" stroke-width="2.5" stroke-linejoin="round">
<path d="M0 108 C12 102 24 98 34 95 C26 104 14 110 0 116 Z"/>
<path d="M0 122 C14 114 30 108 42 105 C32 115 16 124 0 130 Z"/>
<path d="M2 140 C16 130 32 124 44 120 C34 131 18 140 4 146 Z"/>
<path d="M6 156 C20 146 36 140 46 137 C38 148 22 156 8 162 Z"/>
<path d="M12 172 C24 162 40 156 50 153 C42 164 28 172 14 177 Z"/>
<path d="M18 186 C30 178 44 172 54 170 C46 180 32 187 20 191 Z"/>
<path d="M26 198 C36 192 48 188 58 186 C50 195 38 200 28 203 Z"/>
<path d="M34 208 C44 204 54 202 62 201 C56 208 46 212 36 213 Z"/>
<path d="M0 146 C4 158 6 170 8 180 C2 172 0 162 0 152 Z"/>
<path d="M0 168 C6 178 10 188 14 196 C6 190 2 182 0 176 Z"/>
<path d="M4 188 C10 196 16 204 20 210 C12 206 6 198 4 192 Z"/>
<path d="M0 226 C14 222 28 222 40 226 C28 230 14 232 0 232 Z"/>
<path d="M0 240 C12 236 24 238 34 242 C22 246 10 246 0 246 Z"/>
<path d="M0 252 C10 250 20 252 28 256 C18 258 8 258 0 258 Z"/>
</g>
<path d="M0 132 C20 155 42 185 66 214" stroke="#3e6a2c" stroke-width="1.8" fill="none"/>
<!-- bottom mushrooms -->
<g filter="url(#b1)">
<path d="M57 238 C57 228 70 224 84 227 C92 231 88 240 80 244 C70 248 58 246 57 238 Z" fill="#b88c4a"/>
<path d="M76 241 L100 255" stroke="#c9a66a" stroke-width="9" stroke-linecap="round"/>
<path d="M265 188 C262 198 263 218 270 228 C282 233 296 229 298 214 C296 200 285 186 274 182 Z" fill="#b5863c"/>
<path d="M290 196 C296 192 308 193 310 200 C310 208 304 213 296 212 C290 210 288 202 290 196 Z" fill="#c9a870"/>
<path d="M296 236 C303 222 316 218 327 230 C326 242 312 248 300 247 Z" fill="#b08040"/>
<path d="M300 240 L314 226" stroke="#d0b070" stroke-width="6" stroke-linecap="round"/>
<path d="M254 262 C256 242 268 232 280 236 C292 240 294 254 292 262 Z" fill="#a67a36"/>
<path d="M272 252 L282 226" stroke="#d3b57c" stroke-width="6" stroke-linecap="round"/>
</g>
</svg>
<!-- bottom controls -->
<div class="a" style="left:402px;top:509px;width:73px;height:23px;border:1px solid #adadad;background:#e1e1e1"></div>
<div class="t" style="left:407px;top:514px;color:#000;font-size:13.4px">Erweitert...</div>
<div class="t" style="left:504px;top:514px;color:#000;font-size:13px">Deckkraft:</div>
<div class="a" style="left:576px;top:511px;width:39px;height:21px;border:1px solid #7a7a7a;background:#fff"></div>
<div class="t" style="left:588px;top:515px;color:#000;font-size:13px">100</div>
<div class="t" style="left:621px;top:515px;color:#000;font-size:13.5px">%</div>
<div class="a" style="left:650px;top:520px;width:114px;height:4px;border:1px solid #d6d6d6;background:#e7e7e7"></div>
<div class="a" style="left:754px;top:511px;width:11px;height:21px;background:#0078d7"></div>
<div class="t" style="left:798px;top:512px;color:#000;font-size:13px">Drehen:</div>
<div class="a" style="left:850px;top:509px;width:49px;height:24px;border:1px solid #adadad;background:#e5e5e5"></div>
<div class="t" style="left:855px;top:514px;color:#000">0</div>
<svg style="left:885px;top:519px" width="10" height="6"><path d="M0.5 0.5L5 5L9.5 0.5" stroke="#333" stroke-width="1" fill="none"/></svg>
<div class="a" style="left:720px;top:579px;width:86px;height:23px;border:1px solid #adadad;background:#e1e1e1"></div>
<div class="t" style="left:755px;top:584px;color:#000;font-size:12.3px">OK</div>
<div class="a" style="left:836px;top:579px;width:86px;height:23px;border:1px solid #adadad;background:#e1e1e1"></div>
<div class="t" style="left:849px;top:584px;color:#000;font-size:12.7px">Abbrechen</div>

</body></html>
